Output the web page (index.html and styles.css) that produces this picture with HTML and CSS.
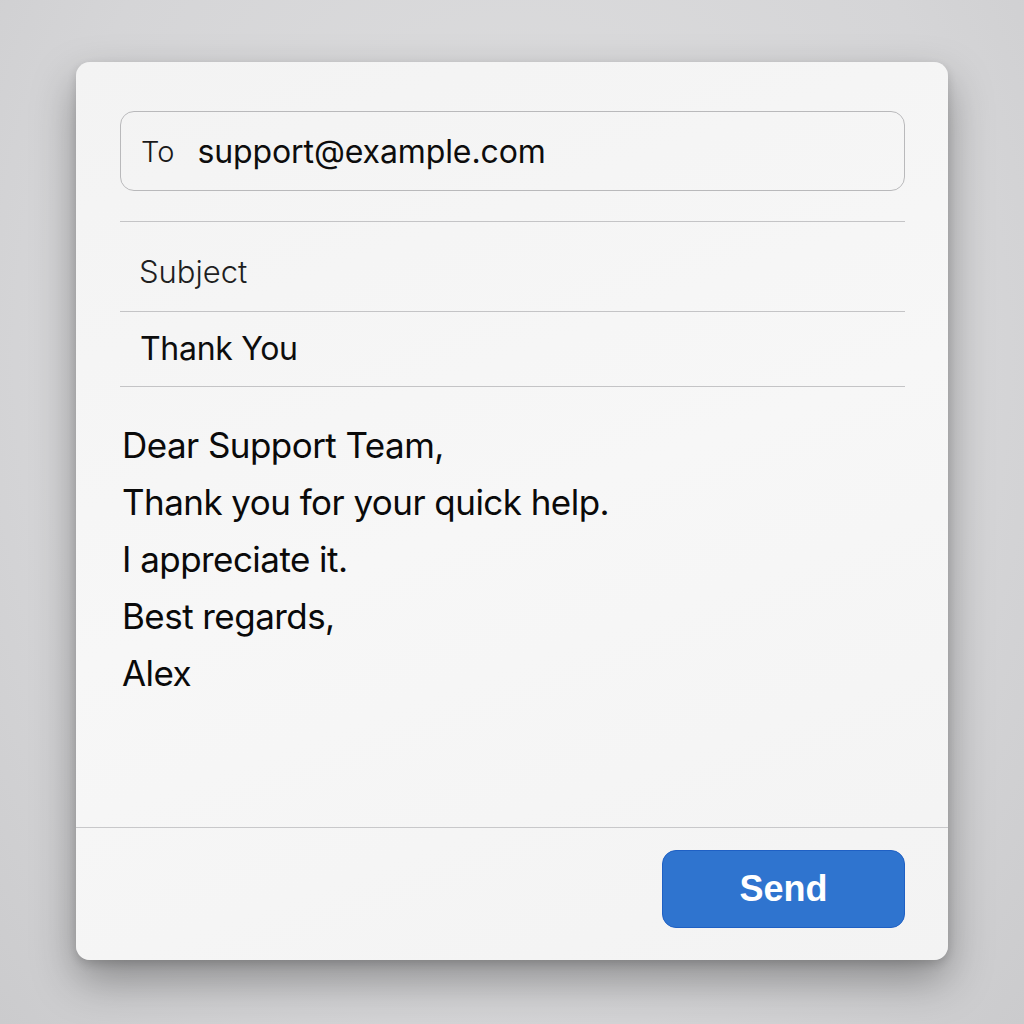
FILE: index.html
```html
<!DOCTYPE html>
<html>
<head>
<meta charset="utf-8">
<link rel="stylesheet" href="styles.css">
</head>
<body>
<div class="card">
  <div class="content">
    <div class="to-field">
      <span class="to-label">To</span>
      <span class="to-value">support@example.com</span>
    </div>
    <div class="row subject-label">Subject</div>
    <div class="row subject-value">Thank You</div>
    <div class="body-text">
      <p>Dear Support Team,</p>
      <p>Thank you for your quick help.</p>
      <p>I appreciate it.</p>
      <p>Best regards,</p>
      <p>Alex</p>
    </div>
  </div>
  <div class="footer">
    <button class="send">Send</button>
  </div>
</div>
</body>
</html>
```
FILE: styles.css
```css
html, body {
  margin: 0;
  padding: 0;
}
body {
  width: 1024px;
  height: 1024px;
  background: radial-gradient(ellipse at 50% 35%, #dededf 0%, #d5d5d7 65%, #cbcbcd 100%);
  font-family: Inter, "Liberation Sans", sans-serif;
  color: #111;
  padding-top: 62px;
  box-sizing: border-box;
  overflow: hidden;
}
.card {
  margin-left: 76px;
  width: 872px;
  height: 898px;
  background: linear-gradient(160deg, #f3f3f3 0%, #f7f7f7 50%, #f3f3f3 100%);
  border-radius: 14px;
  box-shadow: 0 20px 44px rgba(0,0,0,0.34), 0 4px 10px rgba(0,0,0,0.14);
  display: flex;
  flex-direction: column;
  overflow: hidden;
}
.content {
  flex: 1;
  padding: 49px 43px 0 44px;
}
.to-field {
  border: 1px solid #b9b9bb;
  border-radius: 14px;
  display: flex;
  align-items: center;
  padding-left: 20px;
  box-sizing: border-box;
  height: 80px;
}
.to-label {
  font-size: 29px;
  font-weight: 300;
  color: #1a1a1a;
  margin-right: 23px;
}
.to-value {
  font-size: 32px;
  letter-spacing: -0.1px;
  color: #0d0d0d;
}
.row {
  border-bottom: 1px solid #c4c4c6;
  padding-left: 20px;
  display: flex;
  align-items: center;
  box-sizing: border-box;
}
.subject-label {
  margin-top: 30px;
  border-top: 1px solid #c4c4c6;
  height: 91px;
  font-size: 31px;
  font-weight: 300;
  color: #1f1f1f;
  padding-left: 19px;
  padding-top: 9px;
}
.subject-value {
  height: 75px;
  font-size: 32px;
  letter-spacing: -0.3px;
  color: #0d0d0d;
  padding-bottom: 2px;
}
.body-text {
  padding-top: 30px;
  padding-left: 2px;
}
.body-text p {
  margin: 0;
  font-size: 35px;
  line-height: 57px;
  color: #0a0a0a;
  letter-spacing: -0.55px;
}
.footer {
  height: 133px;
  border-top: 1px solid #c8c8ca;
  display: flex;
  justify-content: flex-end;
  align-items: flex-start;
  padding: 22px 43px 0 0;
  box-sizing: border-box;
}
.send {
  width: 243px;
  height: 78px;
  background: #2f74cf;
  border: 1px solid #1f60c4;
  border-radius: 14px;
  color: #fff;
  font-family: "Liberation Sans", Arial, sans-serif;
  font-size: 36px;
  font-weight: 700;
  padding: 0;
}
```
